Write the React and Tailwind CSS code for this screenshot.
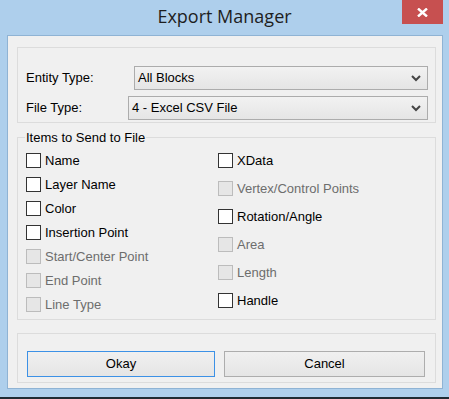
import React from "react";

const font = { fontFamily: '"Liberation Sans", Arial, sans-serif' };

function Chevron() {
  return (
    <svg width="10" height="7" viewBox="0 0 10 7" className="shrink-0">
      <polyline points="1,1 5,5 9,1" fill="none" stroke="#444" strokeWidth="2" />
    </svg>
  );
}

function Combo({ value, width }) {
  return (
    <div
      className={
        "h-[24px] flex items-center justify-between pl-[3px] pr-[6px] border border-[#acacac] bg-gradient-to-b from-[#f2f2f2] to-[#e5e5e5] text-[13px] text-black " +
        width
      }
    >
      <span>{value}</span>
      <Chevron />
    </div>
  );
}

function Check({ label, disabled }) {
  return (
    <div className="flex items-center h-[15px]">
      <div
        className={
          "w-[15px] h-[15px] shrink-0 border " +
          (disabled ? "border-[#bcbcbc] bg-[#e6e6e6]" : "border-[#333] bg-white")
        }
      />
      <span
        className={
          "ml-[4px] text-[13px] leading-[15px] whitespace-nowrap " +
          (disabled ? "text-[#6d6d6d]" : "text-black")
        }
      >
        {label}
      </span>
    </div>
  );
}

export default function App() {
  const left = [
    ["Name", false],
    ["Layer Name", false],
    ["Color", false],
    ["Insertion Point", false],
    ["Start/Center Point", true],
    ["End Point", true],
    ["Line Type", true],
  ];
  const right = [
    ["XData", false],
    ["Vertex/Control Points", true],
    ["Rotation/Angle", false],
    ["Area", true],
    ["Length", true],
    ["Handle", false],
  ];

  return (
    <div className="w-[449px] h-[399px] bg-[#aecfec] flex flex-col overflow-hidden" style={font}>
      {/* title bar */}
      <div className="h-[35px] shrink-0 flex items-start relative">
        <div
          className="w-full text-center text-[18px] leading-[35px] text-[#1e1e1e] -mt-[1px]"
          style={{ fontFamily: '"Open Sans", "Noto Sans", sans-serif' }}
        >
          Export Manager
        </div>
        <button className="absolute top-0 right-[6px] w-[41px] h-[24px] bg-[#c75050] flex items-center justify-center">
          <svg width="11" height="9" viewBox="0 0 11 9">
            <path d="M1 0.5 L10 8.5 M10 0.5 L1 8.5" stroke="#fff" strokeWidth="2.4" />
          </svg>
        </button>
      </div>

      {/* client area */}
      <div className="ml-[7px] w-[436px] h-[354px] shrink-0 border border-[#8fb3d4] bg-[#f0f0f0] pl-[9px] pr-[6px] pt-[11px] flex flex-col">
        <div className="h-[76px] border border-[#dcdcdc] pt-[18px] pl-[8px] pr-[7px] flex flex-col gap-[6px]">
          <div className="flex items-center">
            <span className="text-[13px] text-black">Entity Type:</span>
            <div className="ml-auto">
              <Combo value="All Blocks" width="w-[294px]" />
            </div>
          </div>
          <div className="flex items-center">
            <span className="text-[13px] text-black">File Type:</span>
            <div className="ml-auto">
              <Combo value="4 - Excel CSV File" width="w-[300px]" />
            </div>
          </div>
        </div>

        <fieldset className="mt-[7px] h-[190px] border border-[#dcdcdc] pb-[7px]">
          <legend className="ml-[7px] px-[1px] text-[13px] leading-[15px] text-black">
            Items to Send to File
          </legend>
          <div className="flex pt-[8px] pl-[8px]">
            <div className="w-[192px] flex flex-col gap-[9px]">
              {left.map(([l, d]) => (
                <Check key={l} label={l} disabled={d} />
              ))}
            </div>
            <div className="flex flex-col gap-[13px]">
              {right.map(([l, d]) => (
                <Check key={l} label={l} disabled={d} />
              ))}
            </div>
          </div>
        </fieldset>

        <div className="mt-[13px] h-[50px] border border-[#dcdcdc] pt-[17px] pl-[9px] flex gap-[9px]">
          <button className="w-[188px] h-[26px] border border-[#3c91e6] bg-gradient-to-b from-[#f0f0f0] to-[#e5e5e5] text-[13px] text-black">
            Okay
          </button>
          <button className="w-[201px] h-[26px] border border-[#adadad] bg-gradient-to-b from-[#f0f0f0] to-[#e5e5e5] text-[13px] text-black">
            Cancel
          </button>
        </div>
      </div>

      <div className="h-[8px] shrink-0" />
      <div className="h-[2px] shrink-0 bg-[#1f2b33]" />
    </div>
  );
}
